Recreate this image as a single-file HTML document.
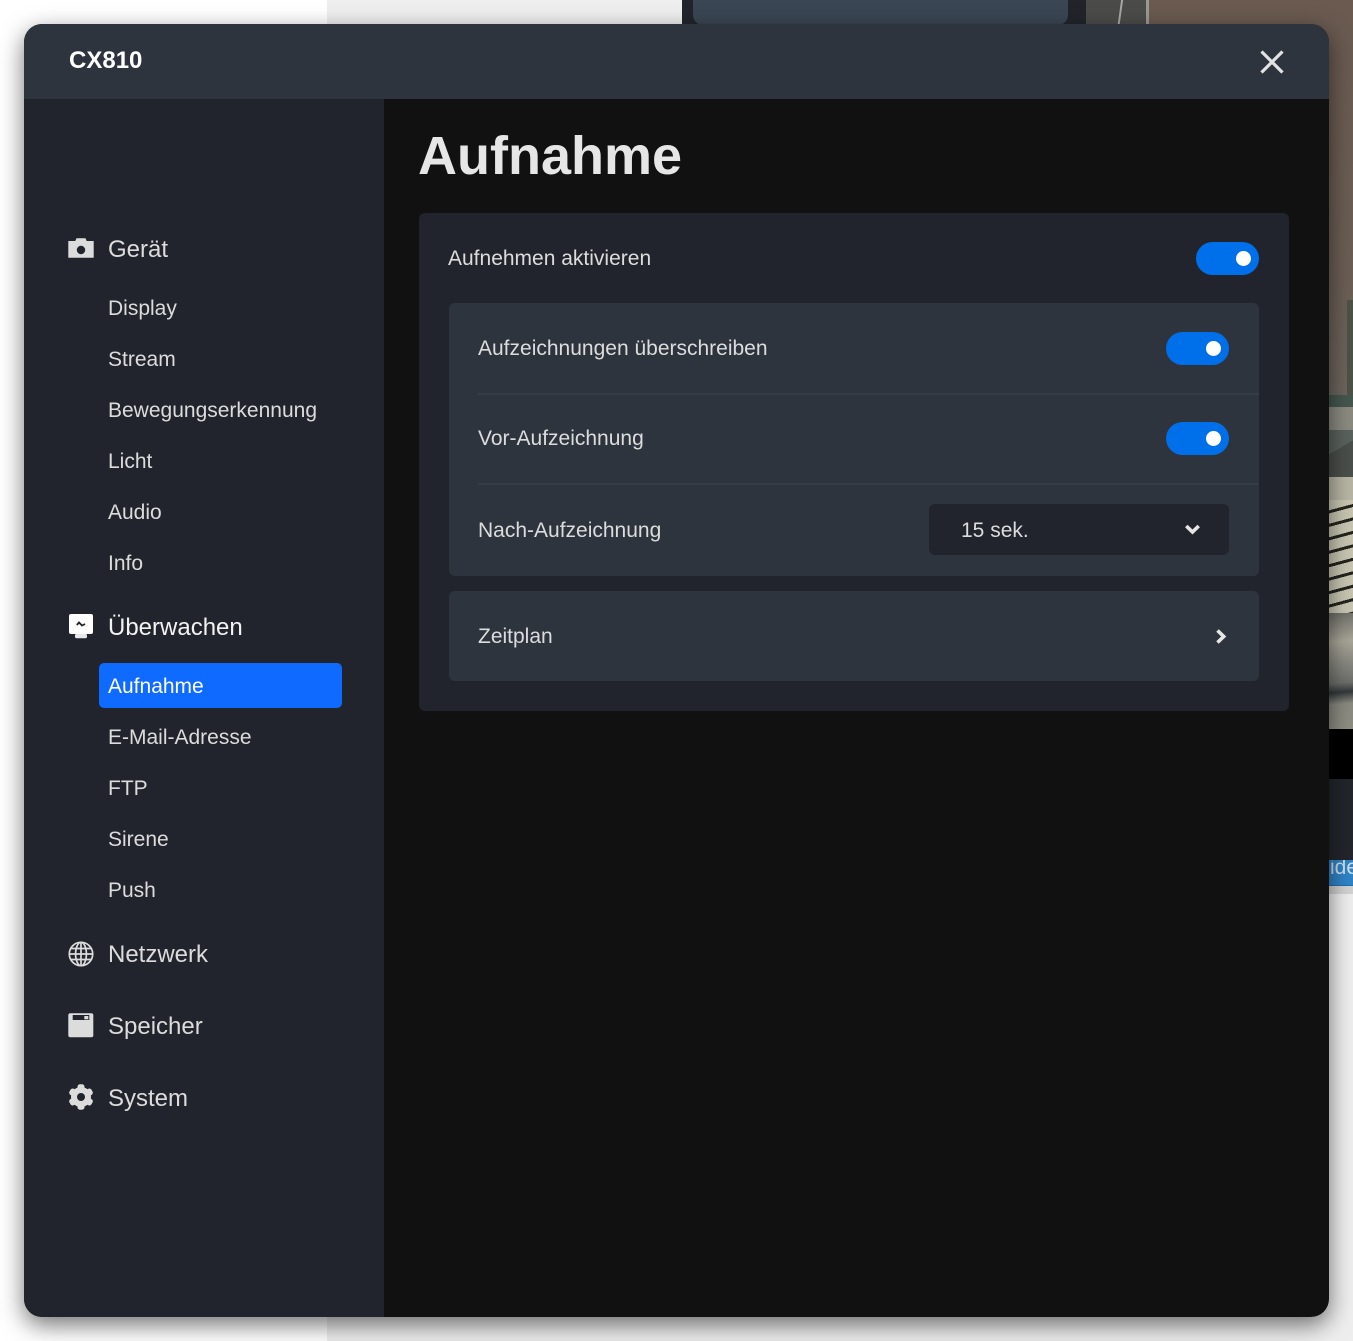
<!DOCTYPE html>
<html lang="de">
<head>
<meta charset="utf-8">
<title>CX810</title>
<style>
html,body{margin:0;padding:0;width:1353px;height:1341px;overflow:hidden;background:#fff;font-family:"Liberation Sans",sans-serif}
.a{position:absolute}
.t{position:absolute;white-space:nowrap;line-height:30px;height:30px}
.h{font-size:24px;color:#dcdcdc;left:108px}
.s{font-size:21px;color:#dcdcdc;left:108px}
.r{font-size:21px;color:#dcdcdc}
.tg{position:absolute;width:63px;height:33px;border-radius:17px;background:#0070ea}
.tg i{position:absolute;left:40px;width:15px;height:15px;top:9px;border-radius:50%;background:#fff}
svg{position:absolute;display:block}
</style>
</head>
<body>
<!-- background page -->
<div class="a" style="left:327px;top:0;width:1026px;height:1341px;background:#eee"></div>
<div class="a" style="left:682px;top:0;width:404px;height:30px;background:#21252b"></div>
<div class="a" style="left:693px;top:-10px;width:375px;height:35px;border-radius:10px;background:#3a4653"></div>
<div class="a" style="left:1086px;top:0;width:267px;height:729px;background:linear-gradient(180deg,#6a5a50 0,#6b5e55 280px,#6c645d 395px)"></div>
<div class="a" style="left:1086px;top:0;width:61px;height:30px;background:#4b4b49"></div>
<div class="a" style="left:1119px;top:0;width:2px;height:30px;background:#a8a8a0;transform:skewX(-8deg)"></div>
<div class="a" style="left:1146px;top:0;width:3px;height:30px;background:#9a9a90"></div>
<div class="a" style="left:1347px;top:300px;width:6px;height:95px;background:#4d5248"></div>
<div class="a" style="left:1329px;top:395px;width:24px;height:12px;background:#46574f"></div>
<div class="a" style="left:1329px;top:407px;width:24px;height:23px;background:#8a8a80"></div>
<div class="a" style="left:1329px;top:430px;width:24px;height:47px;background:linear-gradient(150deg,#5a625d 40%,#4a4f4b 40%)"></div>
<div class="a" style="left:1329px;top:477px;width:24px;height:23px;background:#b8b5a4"></div>
<div class="a" style="left:1329px;top:500px;width:24px;height:113px;background:repeating-linear-gradient(165deg,#c8c6b2 0,#c8c6b2 10px,#25241f 10px,#25241f 13px)"></div>
<div class="a" style="left:1329px;top:613px;width:24px;height:116px;background:linear-gradient(175deg,#6e6e68 0,#a9a698 25%,#8a8a82 42%,#6d6f6b 60%,#33383a 68%,#8a8a80 78%,#8f8e85 100%)"></div>
<div class="a" style="left:1329px;top:729px;width:24px;height:50px;background:#000"></div>
<div class="a" style="left:1329px;top:779px;width:24px;height:81px;background:#22262c"></div>
<div class="a" style="left:1329px;top:860px;width:24px;height:25px;background:#2f84c6;border-bottom:1px solid #1f6fb0;overflow:hidden"><span style="position:absolute;left:1px;top:-4px;font-size:21px;line-height:24px;color:#cfe0ee">ide</span></div>
<div class="a" style="left:1329px;top:886px;width:24px;height:8px;background:#d2d2d2"></div>

<!-- modal -->
<div class="a" style="left:24px;top:24px;width:1305px;height:1293px;border-radius:18px;box-shadow:0 8px 24px rgba(0,0,0,.55)"></div>
<div class="a" style="left:24px;top:24px;width:1305px;height:1293px;border-radius:18px;overflow:hidden;background:#111">
  <div class="a" style="left:0;top:0;width:1305px;height:75px;background:#2d343e"></div>
  <div class="a" style="left:0;top:75px;width:360px;height:1218px;background:#21242c"></div>
</div>

<div class="t" style="left:69px;top:46px;font-size:24px;font-weight:700;color:#fff">CX810</div>
<svg style="left:1258.3px;top:48px" width="28" height="28" viewBox="0 0 28 28"><path d="M3.500 3.500L24.500 24.500M24.500 3.500L3.500 24.500" stroke="#e2e2e2" stroke-width="3.200" fill="none"/></svg>

<!-- sidebar -->
<svg style="left:68px;top:237px" width="26" height="22" viewBox="0 0 26 22"><path fill-rule="evenodd" fill="#dcdcdc" d="M.3 4h7L8.500 1.300h9L18.700 4h7v16.800H.3zM13 8.800a4.200 4.200 0 1 0 0 8.400 4.200 4.200 0 0 0 0-8.400z"/></svg>
<div class="t h" style="top:235px">Gerät</div>
<div class="t s" style="top:294px">Display</div>
<div class="t s" style="top:345px">Stream</div>
<div class="t s" style="top:396px">Bewegungserkennung</div>
<div class="t s" style="top:447px">Licht</div>
<div class="t s" style="top:498px">Audio</div>
<div class="t s" style="top:549px">Info</div>

<svg style="left:68px;top:613px" width="26" height="26" viewBox="0 0 26 26"><path fill="#fff" d="M3 1h20a2 2 0 0 1 2 2v16a2 2 0 0 1-2 2H3a2 2 0 0 1-2-2V3a2 2 0 0 1 2-2z"/><rect x="7" y="21" width="12" height="4.300" rx="1.500" fill="#e8e8e8"/><path d="M8.800 12L11 9.500l3 3L17 11" stroke="#21242c" stroke-width="1.800" fill="none"/></svg>
<div class="t h" style="top:613px;color:#f2f2f2">Überwachen</div>
<div class="a" style="left:99px;top:663px;width:243px;height:45px;background:#0f6bff;border-radius:5px"></div>
<div class="t s" style="top:672px;color:#fff">Aufnahme</div>
<div class="t s" style="top:723px">E-Mail-Adresse</div>
<div class="t s" style="top:774px">FTP</div>
<div class="t s" style="top:825px">Sirene</div>
<div class="t s" style="top:876px">Push</div>

<svg style="left:67.700px;top:940.500px" width="26" height="26" viewBox="0 0 26 26" fill="none" stroke="#dcdcdc" stroke-width="1.700"><circle cx="13" cy="13" r="11.700"/><ellipse cx="13" cy="13" rx="5.400" ry="11.700"/><path d="M13 1.300v23.400M1.300 13h23.400M3 7.500h20M3 18.500h20"/></svg>
<div class="t h" style="top:940px">Netzwerk</div>

<svg style="left:68px;top:1013px" width="26" height="25" viewBox="0 0 26 25"><path fill-rule="evenodd" fill="#dcdcdc" d="M2.300.3h21a2 2 0 0 1 2 2v20a2 2 0 0 1-2 2h-21a2 2 0 0 1-2-2v-20a2 2 0 0 1 2-2zM4.700 2v5h16.600V2z"/><rect x="16.300" y="3" width="4" height="3.300" fill="#dcdcdc"/></svg>
<div class="t h" style="top:1012px">Speicher</div>

<svg style="left:68px;top:1084px" width="26" height="26" viewBox="0 0 26 26" fill="#dcdcdc"><circle cx="13" cy="13" r="10"/><rect x="9.500" y=".3" width="7" height="25.400" rx="2.500"/><rect x="9.500" y=".3" width="7" height="25.400" rx="2.500" transform="rotate(60 13 13)"/><rect x="9.500" y=".3" width="7" height="25.400" rx="2.500" transform="rotate(120 13 13)"/><circle cx="13" cy="13" r="4" fill="#21242c"/></svg>
<div class="t h" style="top:1084px">System</div>

<!-- content -->
<div class="t" style="left:418px;top:126px;font-size:54px;font-weight:700;color:#e6e6e6;line-height:60px;height:60px">Aufnahme</div>

<div class="a" style="left:419px;top:213px;width:870px;height:498px;background:#21242c;border-radius:6px"></div>
<div class="t r" style="left:448px;top:244px">Aufnehmen aktivieren</div>
<div class="tg" style="left:1196px;top:242px"><i></i></div>

<div class="a" style="left:449px;top:303px;width:810px;height:273px;background:#2d343e;border-radius:6px"></div>
<div class="t r" style="left:478px;top:334px">Aufzeichnungen überschreiben</div>
<div class="tg" style="left:1166px;top:332px"><i></i></div>
<div class="a" style="left:478px;top:393px;width:781px;height:2px;background:#363c47"></div>
<div class="t r" style="left:478px;top:424px">Vor-Aufzeichnung</div>
<div class="tg" style="left:1166px;top:422px"><i></i></div>
<div class="a" style="left:478px;top:483px;width:781px;height:2px;background:#363c47"></div>
<div class="t r" style="left:478px;top:516px">Nach-Aufzeichnung</div>
<div class="a" style="left:929px;top:504px;width:300px;height:51px;background:#21242c;border-radius:6px"></div>
<div class="t r" style="left:961px;top:516px">15 sek.</div>
<svg style="left:1184px;top:523px" width="17" height="13" viewBox="0 0 17 13"><path d="M2.300 3L8.500 9L14.700 3" stroke="#e6e6e6" stroke-width="3.600" fill="none"/></svg>

<div class="a" style="left:449px;top:591px;width:810px;height:90px;background:#2d343e;border-radius:6px"></div>
<div class="t r" style="left:478px;top:622px">Zeitplan</div>
<svg style="left:1213px;top:628px" width="15" height="17" viewBox="0 0 15 17"><path d="M4.500 2.500L10.700 8.500L4.500 14.500" stroke="#e6e6e6" stroke-width="3.600" fill="none"/></svg>
</body>
</html>
